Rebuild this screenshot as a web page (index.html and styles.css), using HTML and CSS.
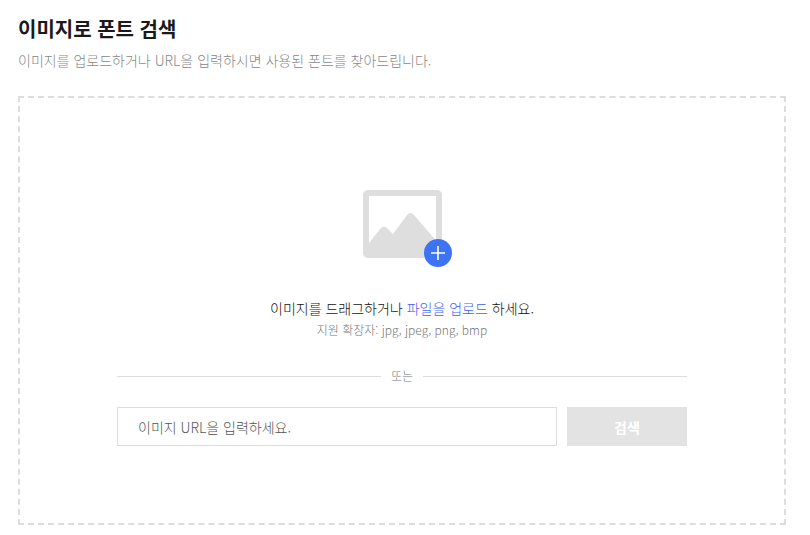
FILE: index.html
```html
<!DOCTYPE html>
<html lang="ko">
<head>
<meta charset="utf-8">
<title>이미지로 폰트 검색</title>
<link rel="stylesheet" href="styles.css">
</head>
<body>
<main class="page">
  <h1 class="title">이미지로 폰트 검색</h1>
  <p class="subtitle">이미지를 업로드하거나 URL을 입력하시면 사용된 폰트를 찾아드립니다.</p>
  <section class="dropzone">
    <svg class="upload-icon" width="90" height="78" viewBox="0 0 90 78" aria-hidden="true">
      <rect x="3" y="3" width="73" height="62" rx="2" fill="none" stroke="#dedede" stroke-width="6"/>
      <path d="M6 53 L18 38 Q21 35 24 38 L30 44 L44 25 Q47.5 21 51 25 L76 54 V65 H6 Z" fill="#dedede"/>
      <circle cx="75" cy="63" r="14" fill="#3f73f5"/>
      <path d="M75 56 V70 M68 63 H82" stroke="#fff" stroke-width="1.6" fill="none"/>
    </svg>
    <p class="drop-text">이미지를 드래그하거나 <a class="file-link" href="#">파일을 업로드</a> 하세요.</p>
    <p class="formats">지원 확장자: jpg, jpeg, png, bmp</p>
    <div class="divider"><span class="divider-label">또는</span></div>
    <form class="url-form">
      <input class="url-input" type="text" placeholder="이미지 URL을 입력하세요.">
      <button class="search-btn" type="button">검색</button>
    </form>
  </section>
</main>
</body>
</html>
```

FILE: styles.css
```css
* { box-sizing: border-box; }
html, body { margin: 0; padding: 0; background: #fff; }
body {
  font-family: "Noto Sans CJK KR", "Noto Sans", sans-serif;
  color: #222;
  overflow: hidden;
}
.page { width: 810px; padding: 15px 24px 0 18px; }
.title {
  margin: 0;
  font-size: 20px;
  line-height: 28px;
  font-weight: 700;
  color: #1a1a1a;
}
.subtitle {
  margin: 7px 0 0;
  font-size: 14px;
  line-height: 20px;
  font-weight: 300;
  color: #888;
}
.dropzone {
  margin-top: 26px;
  height: 429px;
  border: 2px dashed #ddd;
  display: flex;
  flex-direction: column;
  align-items: center;
  padding-top: 92px;
}
.upload-icon { display: block; margin-left: 12px; }
.drop-text {
  margin: 30px 0 0;
  font-size: 14px;
  line-height: 20px;
  font-weight: 300;
  color: #111;
}
.file-link { color: #3f5ff5; text-decoration: none; }
.formats {
  margin: 3px 0 0;
  font-size: 12px;
  line-height: 18px;
  font-weight: 300;
  color: #777;
}
.divider {
  width: 570px;
  margin-top: 28px;
  display: flex;
  align-items: center;
  gap: 10px;
  font-size: 12px;
  line-height: 18px;
  color: #777;
  font-weight: 300;
}
.divider::before, .divider::after {
  content: "";
  flex: 1;
  height: 1px;
  background: #ddd;
}
.url-form {
  width: 570px;
  margin-top: 22px;
  display: flex;
  gap: 10px;
}
.url-input {
  flex: 1;
  height: 39px;
  border: 1px solid #ddd;
  border-radius: 0;
  padding: 0 20px;
  font: 300 14px "Noto Sans CJK KR", sans-serif;
  color: #222;
  outline: none;
}
.url-input::placeholder { color: #555; opacity: 1; }
.search-btn {
  width: 120px;
  height: 39px;
  border: 0;
  background: #e3e3e3;
  color: #fff;
  font: 700 14px "Noto Sans CJK KR", sans-serif;
}
```
